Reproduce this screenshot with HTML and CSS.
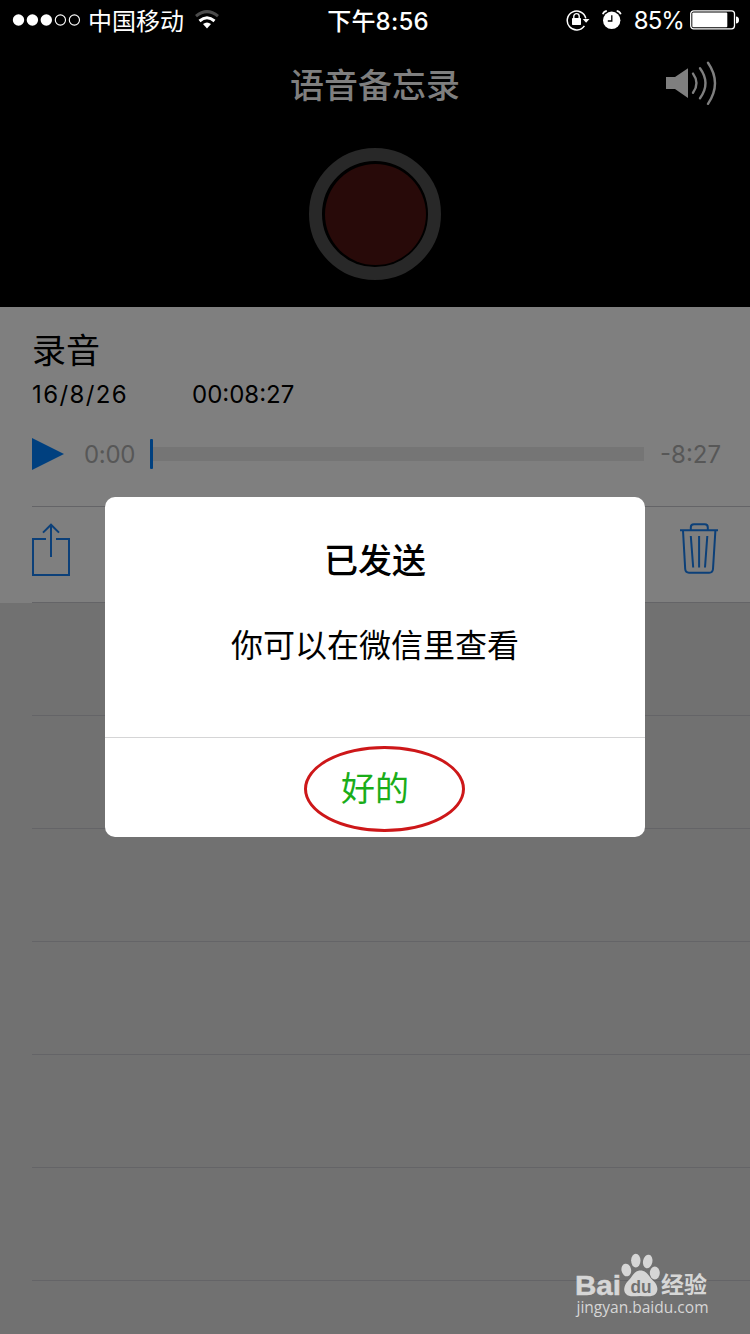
FILE: index.html
```html
<!DOCTYPE html>
<html lang="zh-CN">
<head>
<meta charset="utf-8">
<title>语音备忘录</title>
<link rel="stylesheet" href="styles.css">
</head>
<body>
<main class="screen">
  <header class="top">
    <div class="status">
      <div class="status-left">
        <svg class="signal" width="70" height="14" viewBox="0 0 70 14"><g fill="#fff"><circle cx="6.5" cy="7" r="5.7"/><circle cx="20.4" cy="7" r="5.7"/><circle cx="34.3" cy="7" r="5.7"/></g><g fill="none" stroke="#fff" stroke-width="1.1"><circle cx="48.4" cy="7" r="5.1"/><circle cx="62.4" cy="7" r="5.1"/></g></svg>
        <span class="carrier">中国移动</span>
        <svg class="wifi" width="26" height="20" viewBox="0 0 26 20" fill="none"><path d="M2 6.2Q13-3 24 6.2" stroke="#4b4b4b" stroke-width="3"/><path d="M5.5 11Q13 4.5 20.5 11" stroke="#fff" stroke-width="3"/><path d="M9 14.1Q13 10.7 17 14.1L13 18.6Z" fill="#fff"/></svg>
      </div>
      <div class="clock">下午8:56</div>
      <div class="status-right">
        <svg class="lock" width="24" height="22" viewBox="0 0 24 22" fill="none"><path d="M18.4 16.8A9.4 9.4 0 1 1 19.8 9.4" stroke="#fff" stroke-width="1.5"/><path d="M16.7 10H23.5L20.1 13.7Z" fill="#fff"/><rect x="6" y="9" width="9" height="7" rx=".7" fill="#fff"/><path d="M7.8 9V7.3a2.7 2.7 0 0 1 5.4 0V9" stroke="#fff" stroke-width="1.4"/></svg>
        <svg class="alarm" width="20" height="20" viewBox="0 0 20 20" fill="none"><circle cx="9.7" cy="10.3" r="8.7" fill="#fff"/><path d="M9.8 5.2V11H5.8" stroke="#000" stroke-width="1.3"/><path d="M.8 4.2Q1.6 1.4 4.8.9M14.7.9Q17.9 1.4 18.8 4.2" stroke="#fff" stroke-width="1.6"/></svg>
        <span class="percent">85%</span>
        <svg class="battery" width="50" height="20" viewBox="0 0 50 20"><rect x=".7" y=".8" width="43.8" height="18" rx="3" fill="none" stroke="#fff" stroke-width="1.3"/><rect x="2.3" y="2.4" width="35" height="14.8" rx="1" fill="#fff"/><path d="M46 6.4q3 .3 3 3.5T46 13.4Z" fill="#fff"/></svg>
      </div>
    </div>
    <div class="nav">
      <h1 class="title">语音备忘录</h1>
      <svg class="speaker" width="54" height="46" viewBox="0 0 54 46" fill="none"><path d="M1 16H10L23 7.2V37L10 28H1Z" fill="#7f7f7f"/><g stroke="#7f7f7f" stroke-width="2.4" stroke-linecap="round"><path d="M28 12.6Q35 22.2 28 31.8"/><path d="M35 7.2Q46 22.2 35 37.2"/><path d="M43 1.8Q57 22.2 43 42.8"/></g></svg>
    </div>
    <div class="record"><div class="record-dot"></div></div>
  </header>
  <section class="memo">
    <h2 class="memo-name">录音</h2>
    <div class="memo-meta"><span class="date">16/8/26</span><span class="length">00:08:27</span></div>
    <div class="player">
      <svg class="play" width="32" height="32" viewBox="0 0 32 32"><path d="M0 0L32 16L0 32Z" fill="#00407f"/></svg>
      <span class="elapsed">0:00</span>
      <span class="playhead"></span><span class="track"></span>
      <span class="remaining">-8:27</span>
    </div>
    <div class="actions">
      <svg width="38" height="53" viewBox="0 0 38 53" fill="none" stroke="#0c4079" stroke-width="2"><path d="M14 16H1V52H37V16H24M19 34V2M11 9.6L19 1.7L27 9.6"/></svg>
      <svg width="38" height="51" viewBox="0 0 38 51" fill="none" stroke="#0c4079" stroke-width="2"><path d="M0 7.3H38M10.8 7V4.5Q10.8 1.3 14 1.3H24.7Q27.8 1.3 27.8 4.5V7M3 7.5L5.2 46Q5.5 49.7 9 49.7H29.3Q32.6 49.7 33 46L35.4 7.5M10.8 13L13.2 44.5M19.1 13V44.5M27.3 13L25 44.5"/></svg>
    </div>
  </section>
  <div class="rows"><div class="row"></div><div class="row"></div><div class="row"></div><div class="row"></div><div class="row"></div><div class="row"></div><div class="row"></div></div>
  <section class="dialog">
    <div class="dialog-body">
      <h3 class="dialog-title">已发送</h3>
      <p class="dialog-text">你可以在微信里查看</p>
    </div>
    <div class="dialog-button">好的</div>
    <div class="ring"></div>
  </section>
  <svg class="watermark" width="150" height="74" viewBox="0 0 150 74" fill="#d6d6d6">
    <text class="wm-bai" x="4" y="43.5" textLength="46" lengthAdjust="spacingAndGlyphs">Bai</text>
    <ellipse cx="55.3" cy="19" rx="4.8" ry="6.4" transform="rotate(-12 55.3 19)"/><ellipse cx="64.8" cy="9.6" rx="4.7" ry="6.8"/><ellipse cx="76.7" cy="10.5" rx="4.7" ry="6.8" transform="rotate(12 76.7 10.5)"/><ellipse cx="83.8" cy="22" rx="5" ry="6.4"/>
    <path d="M69.5 19.5C76 19.5 78 26 83 30.5C87 34.5 87.5 40 84.5 43C81 46.5 75 45 69.5 45S58 46.5 55 43C52 40 53 34.5 56.5 30.5C61.5 26 63 19.5 69.5 19.5Z"/>
    <text class="wm-du" x="59.5" y="41.5" textLength="21" lengthAdjust="spacingAndGlyphs">du</text>
    <text class="wm-cn" x="90" y="42" textLength="46" lengthAdjust="spacingAndGlyphs">经验</text>
    <text class="wm-url" x="5.5" y="62" textLength="132" lengthAdjust="spacingAndGlyphs">jingyan.baidu.com</text>
  </svg>
</main>
</body>
</html>
```
FILE: styles.css
```css
* { box-sizing: border-box; }
body { margin: 0; }
h1, h2, h3, p { margin: 0; font-weight: 400; }
svg { display: block; flex: none; }
.screen {
  position: relative;
  width: 750px;
  height: 1334px;
  overflow: hidden;
  background: #717171;
  color: #000;
  font-family: Inter, "Noto Sans CJK SC", sans-serif;
}
.top { height: 307px; background: #000; }
.status {
  display: grid;
  grid-template-columns: 1fr auto 1fr;
  grid-template-rows: 40px;
  height: 40px;
  padding: 0 11px 0 12px;
  color: #fff;
  font-size: 24px;
  line-height: 40px;
}
.status-left, .status-right { display: flex; align-items: center; height: 40px; }
.status-right { justify-content: flex-end; }
.carrier { margin-left: 6px; padding-top: 3px; }
.wifi { margin-left: 10px; }
.clock { font-weight: 500; padding: 2px 0 0 5px; letter-spacing: 0.2px; }
.alarm { margin-left: 12px; }
.percent { margin: 0 6px 0 12px; padding-top: 2px; font-size: 24px; letter-spacing: -0.9px; }
.battery { margin-right: -1px; }
.nav {
  display: grid;
  grid-template-columns: 1fr auto 1fr;
  align-items: center;
  height: 88px;
  padding: 0 31px;
  color: #7f7f7f;
}
.title { grid-column: 2; padding-top: 3px; font-size: 34px; font-weight: 500; line-height: 50px; }
.speaker { justify-self: end; }
.record {
  display: grid;
  place-items: center;
  width: 132px;
  height: 132px;
  margin: 20px auto 0;
  border: 13px solid #282828;
  border-radius: 50%;
}
.record-dot { width: 101px; height: 101px; border-radius: 50%; background: #280a09; }
.memo { height: 296px; padding: 19px 0 0 32px; background: #7f7f7f; }
.memo-name { font-size: 34px; line-height: 50px; }
.memo-meta { display: flex; height: 39px; font-size: 24px; line-height: 38px; }
.date { width: 160px; letter-spacing: 1.4px; }
.player { display: flex; align-items: center; height: 32px; margin-top: 23px; color: #575757; font-size: 24px; }
.elapsed { width: 66px; margin-left: 20px; letter-spacing: -0.3px; }
.playhead { width: 3px; height: 30px; border-radius: 1px; background: #00407f; }
.track { width: 491px; height: 14px; background: #757575; }
.remaining { margin-left: 16px; white-space: nowrap; }
.actions {
  display: flex;
  justify-content: space-between;
  height: 97px;
  margin-top: 36px;
  padding: 16px 32px 0 0;
  border-top: 1px solid #646467;
  border-bottom: 1px solid #646467;
}
.rows { padding-left: 32px; }
.row { height: 113px; border-bottom: 1px solid #646467; }
.dialog {
  position: absolute;
  left: 105px;
  top: 497px;
  width: 540px;
  height: 340px;
  border-radius: 10px;
  background: #fff;
  text-align: center;
}
.dialog-body { height: 241px; padding-top: 39px; border-bottom: 1px solid #d5d5d6; }
.dialog-title { font-size: 34px; font-weight: 500; line-height: 50px; }
.dialog-text { margin-top: 36px; font-size: 32px; line-height: 48px; }
.dialog-button { padding-top: 2px; color: #1aad19; font-size: 34px; line-height: 98px; }
.ring {
  position: absolute;
  left: 199px;
  top: 249px;
  width: 161px;
  height: 86px;
  border: 3px solid #cd1719;
  border-radius: 50%;
}
.watermark { position: absolute; left: 571px; top: 1251px; }
.wm-bai { font: 700 28px "Liberation Sans", sans-serif; stroke: #d6d6d6; stroke-width: 0.5px; }
.wm-du { font: 700 19px "Liberation Sans", sans-serif; fill: #717171; }
.wm-cn { font: 700 23px "Noto Sans CJK SC", sans-serif; }
.wm-url { font: 500 16px "Open Sans", sans-serif; }
```
